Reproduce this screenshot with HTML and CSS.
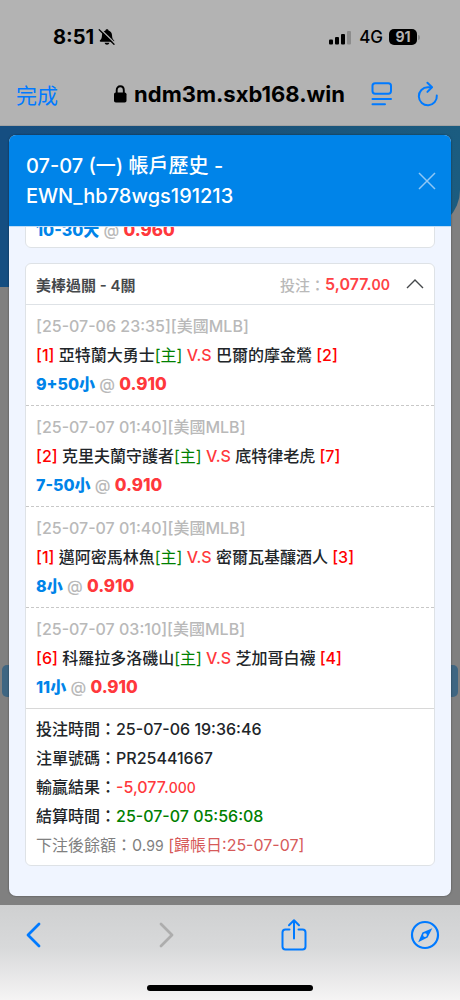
FILE: index.html
```html
<!DOCTYPE html>
<html lang="zh-Hant">
<head>
<meta charset="utf-8">
<meta name="viewport" content="width=device-width, initial-scale=1">
<title>帳戶歷史</title>
<link rel="stylesheet" href="styles.css">
</head>
<body>
<header class="browser-top">
  <div class="status">
    <div class="status-left">
      <span>8:51</span>
      <svg width="18" height="18" viewBox="0 0 18 18"><path d="M9 1.2c.9 0 1.4.5 1.5 1.2 2.2.6 3.4 2.5 3.5 4.6.1 3.200.8 4.100 2 5.300.5.600.2 1.400-.6 1.400H2.600c-.8 0-1.100-.8-.6-1.400C3.200 11.100 3.900 10.200 4 7c.1-2.100 1.300-4 3.500-4.600C7.600 1.700 8.100 1.200 9 1.200zM6.600 14.800h4.800c-.3 1.200-1.200 1.900-2.400 1.900s-2.100-.7-2.400-1.900z"/><path d="M2.300 1L17.600 15.800" stroke="#b3b3b3" stroke-width="1.500"/><path d="M1.200 1.700L16 16.300" stroke="#000" stroke-width="1.300" stroke-linecap="round"/></svg>
    </div>
    <div class="status-right">
      <svg width="24" height="15" viewBox="0 0 24 15"><rect x="0" y="9.500" width="4" height="5" rx="1"/><rect x="6" y="7" width="4" height="7.500" rx="1"/><rect x="12" y="4" width="4" height="10.500" rx="1"/><rect x="18" y="1" width="4" height="13.500" rx="1" fill="#8c8c8c"/></svg>
      <span>4G</span>
      <span class="battery"><span class="battery-level">91</span></span>
    </div>
  </div>
  <div class="address">
    <button class="done" type="button">完成</button>
    <div class="url">
      <svg width="13" height="18" viewBox="0 0 13 18"><rect x="0" y="7.500" width="12.500" height="10" rx="1.800"/><path d="M2.700 8.500V5.200C2.700 2.900 4.200 1.300 6.250 1.300S9.800 2.900 9.800 5.200v3.300" fill="none" stroke="#000" stroke-width="1.900"/></svg>
      <span>ndm3m.sxb168.win</span>
    </div>
    <div class="address-actions">
      <button type="button" aria-label="閱讀器"><svg width="22" height="26" viewBox="0 0 22 26"><g fill="none" stroke="#007aff" stroke-width="2" stroke-linecap="round"><rect x="1.500" y="2.200" width="18.500" height="10.500" rx="2.600"/><path d="M1.500 18H20M1.500 23.300H14"/></g></svg></button>
      <button type="button" aria-label="重新載入"><svg width="22" height="26" viewBox="0 0 22 26"><g fill="none" stroke="#007aff" stroke-width="2" stroke-linecap="round" stroke-linejoin="round"><path d="M19.800 14.500A9 9 0 1 1 10.800 6.300h3.700"/><path d="M10.400 1.800L15 6.300l-4.600 4.600"/></g></svg></button>
    </div>
  </div>
</header>

<main class="page">
  <div class="hero"></div>
  <div class="hero-side"></div>
  <div class="page-bar"></div>
  <section class="modal" role="dialog" aria-labelledby="modal-title">
    <div class="modal-header">
      <h1 id="modal-title">07-07 (一) 帳戶歷史 -<br>EWN_hb78wgs191213</h1>
      <button type="button" class="icon-button" aria-label="關閉"><svg width="18" height="18" viewBox="0 0 18 18"><path d="M1 1l16 16M17 1L1 17" stroke="#8fc7f5" stroke-width="1.500"/></svg></button>
    </div>
    <div class="modal-body">
      <article class="card">
        <div class="bet bet-last">
          <p class="pick"><b class="choice">10-30大</b> <span class="at">@</span> <b class="odds">0.960</b></p>
        </div>
      </article>
      <article class="card">
        <div class="card-header">
          <h2>美棒過關 - 4關</h2>
          <div class="stake">
            <span class="muted">投注：</span><strong>5,077.<small>00</small></strong>
            <button type="button" class="icon-button" aria-label="收合"><svg width="18" height="12" viewBox="0 0 18 12"><path d="M1 10l8-8 8 8" fill="none" stroke="#45484b" stroke-width="1.400"/></svg></button>
          </div>
        </div>
        <div class="bet">
          <p class="muted">[25-07-06 23:35][美國MLB]</p>
          <p><span class="rank">[1]</span> 亞特蘭大勇士<span class="home">[主]</span> <span class="versus">V.S</span> 巴爾的摩金鶯 <span class="rank">[2]</span></p>
          <p class="pick"><b class="choice">9+50小</b> <span class="at">@</span> <b class="odds">0.910</b></p>
        </div>
        <div class="bet">
          <p class="muted">[25-07-07 01:40][美國MLB]</p>
          <p><span class="rank">[2]</span> 克里夫蘭守護者<span class="home">[主]</span> <span class="versus">V.S</span> 底特律老虎 <span class="rank">[7]</span></p>
          <p class="pick"><b class="choice">7-50小</b> <span class="at">@</span> <b class="odds">0.910</b></p>
        </div>
        <div class="bet">
          <p class="muted">[25-07-07 01:40][美國MLB]</p>
          <p><span class="rank">[1]</span> 邁阿密馬林魚<span class="home">[主]</span> <span class="versus">V.S</span> 密爾瓦基釀酒人 <span class="rank">[3]</span></p>
          <p class="pick"><b class="choice">8小</b> <span class="at">@</span> <b class="odds">0.910</b></p>
        </div>
        <div class="bet">
          <p class="muted">[25-07-07 03:10][美國MLB]</p>
          <p><span class="rank">[6]</span> 科羅拉多洛磯山<span class="home">[主]</span> <span class="versus">V.S</span> 芝加哥白襪 <span class="rank">[4]</span></p>
          <p class="pick"><b class="choice">11小</b> <span class="at">@</span> <b class="odds">0.910</b></p>
        </div>
        <div class="summary">
          <p>投注時間：25-07-06 19:36:46</p>
          <p>注單號碼：PR25441667</p>
          <p>輸贏結果：<span class="loss">-5,077.<small>000</small></span></p>
          <p>結算時間：<span class="settled">25-07-07 05:56:08</span></p>
          <p class="balance">下注後餘額：0.<small>99</small> <span class="account-day">[歸帳日:25-07-07]</span></p>
        </div>
      </article>
    </div>
  </section>
</main>

<footer class="browser-bottom">
  <nav class="toolbar">
    <button type="button" aria-label="上一頁"><svg width="30" height="34" viewBox="0 0 30 34"><path d="M22 6L11 17l11 11" fill="none" stroke="#007aff" stroke-width="2.800" stroke-linecap="round" stroke-linejoin="round"/></svg></button>
    <button type="button" aria-label="下一頁" disabled><svg width="30" height="34" viewBox="0 0 30 34"><path d="M13 6l11 11-11 11" fill="none" stroke="#adadad" stroke-width="2.800" stroke-linecap="round" stroke-linejoin="round"/></svg></button>
    <button type="button" aria-label="分享"><svg width="30" height="34" viewBox="0 0 30 34"><g fill="none" stroke="#007aff" stroke-width="2" stroke-linecap="round" stroke-linejoin="round"><path d="M10.500 11.500H6.500c-2 0-3 1-3 3v14c0 2 1 3 3 3h17c2 0 3-1 3-3v-14c0-2-1-3-3-3h-4"/><path d="M15 20.500V2.500M10 7.200l5-5 5 5"/></g></svg></button>
    <button type="button" aria-label="Safari"><svg width="30" height="34" viewBox="0 0 30 34"><circle cx="15" cy="17" r="13" fill="none" stroke="#007aff" stroke-width="2.200"/><path fill="#007aff" fill-rule="evenodd" d="M22.300 10.200L17.600 19.600 8.200 24.200 12.400 14.400zM15 15.200a1.900 1.900 0 1 0 0 3.800 1.900 1.900 0 0 0 0-3.800z"/></svg></button>
  </nav>
  <div class="home-indicator"></div>
</footer>
</body>
</html>
```
FILE: styles.css
```css
* {
  box-sizing: border-box;
}

body {
  margin: 0;
  height: 100vh;
  display: flex;
  flex-direction: column;
  font-family: Inter, "Noto Sans CJK TC", sans-serif;
  font-size: 16px;
  font-weight: 500;
  color: #212529;
}

h1, h2, p {
  margin: 0;
}

button {
  display: flex;
  padding: 0;
  border: 0;
  background: none;
  font: inherit;
}

svg {
  display: block;
}

.browser-top {
  background: #b3b3b3;
  border-bottom: 1px solid #a3a3a3;
  color: #000;
}

.status {
  display: flex;
  justify-content: space-between;
  align-items: center;
  height: 64px;
  padding: 10px 40px 0 53px;
}

.status-left,
.status-right {
  display: flex;
  align-items: center;
}

.status-left {
  gap: 4px;
  font-size: 20px;
  font-weight: 700;
}

.status-right {
  gap: 6px;
  font-size: 17px;
}

.battery {
  display: flex;
  align-items: center;
}

.battery-level {
  width: 28px;
  border-radius: 5px;
  background: #000;
  color: #b3b3b3;
  font-size: 14px;
  font-weight: 700;
  line-height: 16px;
  text-align: center;
}

.battery::after {
  content: "";
  width: 2px;
  height: 5px;
  margin-left: 1px;
  border-radius: 0 2px 2px 0;
  background: #8c8c8c;
}

.address {
  display: flex;
  justify-content: space-between;
  align-items: center;
  height: 61px;
  padding: 0 21px 2px 16px;
}

.done {
  color: #007aff;
  font-size: 21px;
  font-weight: 400;
}

.url {
  display: flex;
  align-items: center;
  gap: 7px;
  margin-left: 30px;
  font-size: 22px;
  font-weight: 700;
}

.address-actions {
  display: flex;
  gap: 24px;
}

.page {
  position: relative;
  flex: 1;
  min-height: 0;
  display: flex;
  padding: 9px;
  overflow: hidden;
  background: #808080;
}

.hero,
.hero-side,
.page-bar {
  position: absolute;
}

.hero {
  inset: 0 0 auto;
  height: 104px;
  border-radius: 0 0 40px 0;
  background: linear-gradient(90deg, #154e81, #195179 50%, #1b5c80);
}

.hero-side {
  top: 0;
  left: 0;
  width: 20px;
  height: 161px;
  background: #154e81;
}

.page-bar {
  top: 539px;
  left: 2px;
  right: 2px;
  height: 32px;
  border-radius: 5px;
  background: #3f6682;
}

.modal {
  position: relative;
  flex: 1;
  display: flex;
  flex-direction: column;
  overflow: hidden;
  border-radius: 7px;
  background: #f0f5ff;
  box-shadow: 0 0 2px #00000080;
}

.modal-header {
  display: flex;
  justify-content: space-between;
  align-items: center;
  padding: 16px 15px 15px 17px;
  border-bottom: 1px solid #bfdcf5;
  background: #0084e9;
  color: #fff;
}

.modal-header h1 {
  font-size: 20px;
  font-weight: 500;
  line-height: 30px;
}

.modal-body {
  flex: 1;
  min-height: 0;
  display: flex;
  flex-direction: column;
  justify-content: flex-end;
  gap: 15px;
  padding: 0 16px 30px 16px;
  overflow: hidden;
}

.card {
  border: 1px solid #dee2e6;
  border-radius: 6px;
  background: #fff;
}

.card-header {
  display: flex;
  justify-content: space-between;
  align-items: center;
  height: 41px;
  padding: 0 10px;
  border-bottom: 1px solid #dee2e6;
}

.card-header h2 {
  color: #45484b;
  font-size: 15px;
  font-weight: 600;
}

.stake {
  display: flex;
  align-items: center;
  font-size: 15px;
}

.stake strong {
  margin-right: 16px;
  color: #ff4245;
  font-size: 16px;
  font-weight: 600;
}

small {
  font-size: 14px;
}

.bet {
  padding: 7px 10px 6px;
  line-height: 29px;
  border-bottom: 1px dashed #c8c8c8;
}

.bet-last {
  padding-bottom: 2px;
  border-bottom: 0;
}

.bet:nth-last-child(2) {
  border-bottom: 1px solid #d8d8d8;
}

.muted,
.at {
  color: #b9b9b9;
}

.rank {
  color: #f00;
}

.home,
.settled {
  color: #008000;
}

.home,
.balance {
  font-weight: 400;
}

.versus,
.odds,
.loss {
  color: #ff383c;
}

.choice {
  color: #0084e9;
}

.pick b {
  font-weight: 800;
}

.pick .odds {
  font-size: 17px;
}

.summary {
  padding: 6px 10px 5px;
  line-height: 29px;
}

.balance {
  color: #808080;
}

.account-day {
  color: #d65a5a;
}

.browser-bottom {
  display: flex;
  flex-direction: column;
  justify-content: space-between;
  align-items: center;
  height: 95px;
  padding: 13px 0 9px;
  background: linear-gradient(#cfd0d1, #d8d9da 45%, #f5f4f4);
}

.toolbar {
  display: flex;
  justify-content: space-between;
  width: 100%;
  padding: 0 20px 0 17px;
}

.home-indicator {
  width: 36%;
  height: 6px;
  border-radius: 3px;
  background: #000;
}
```
